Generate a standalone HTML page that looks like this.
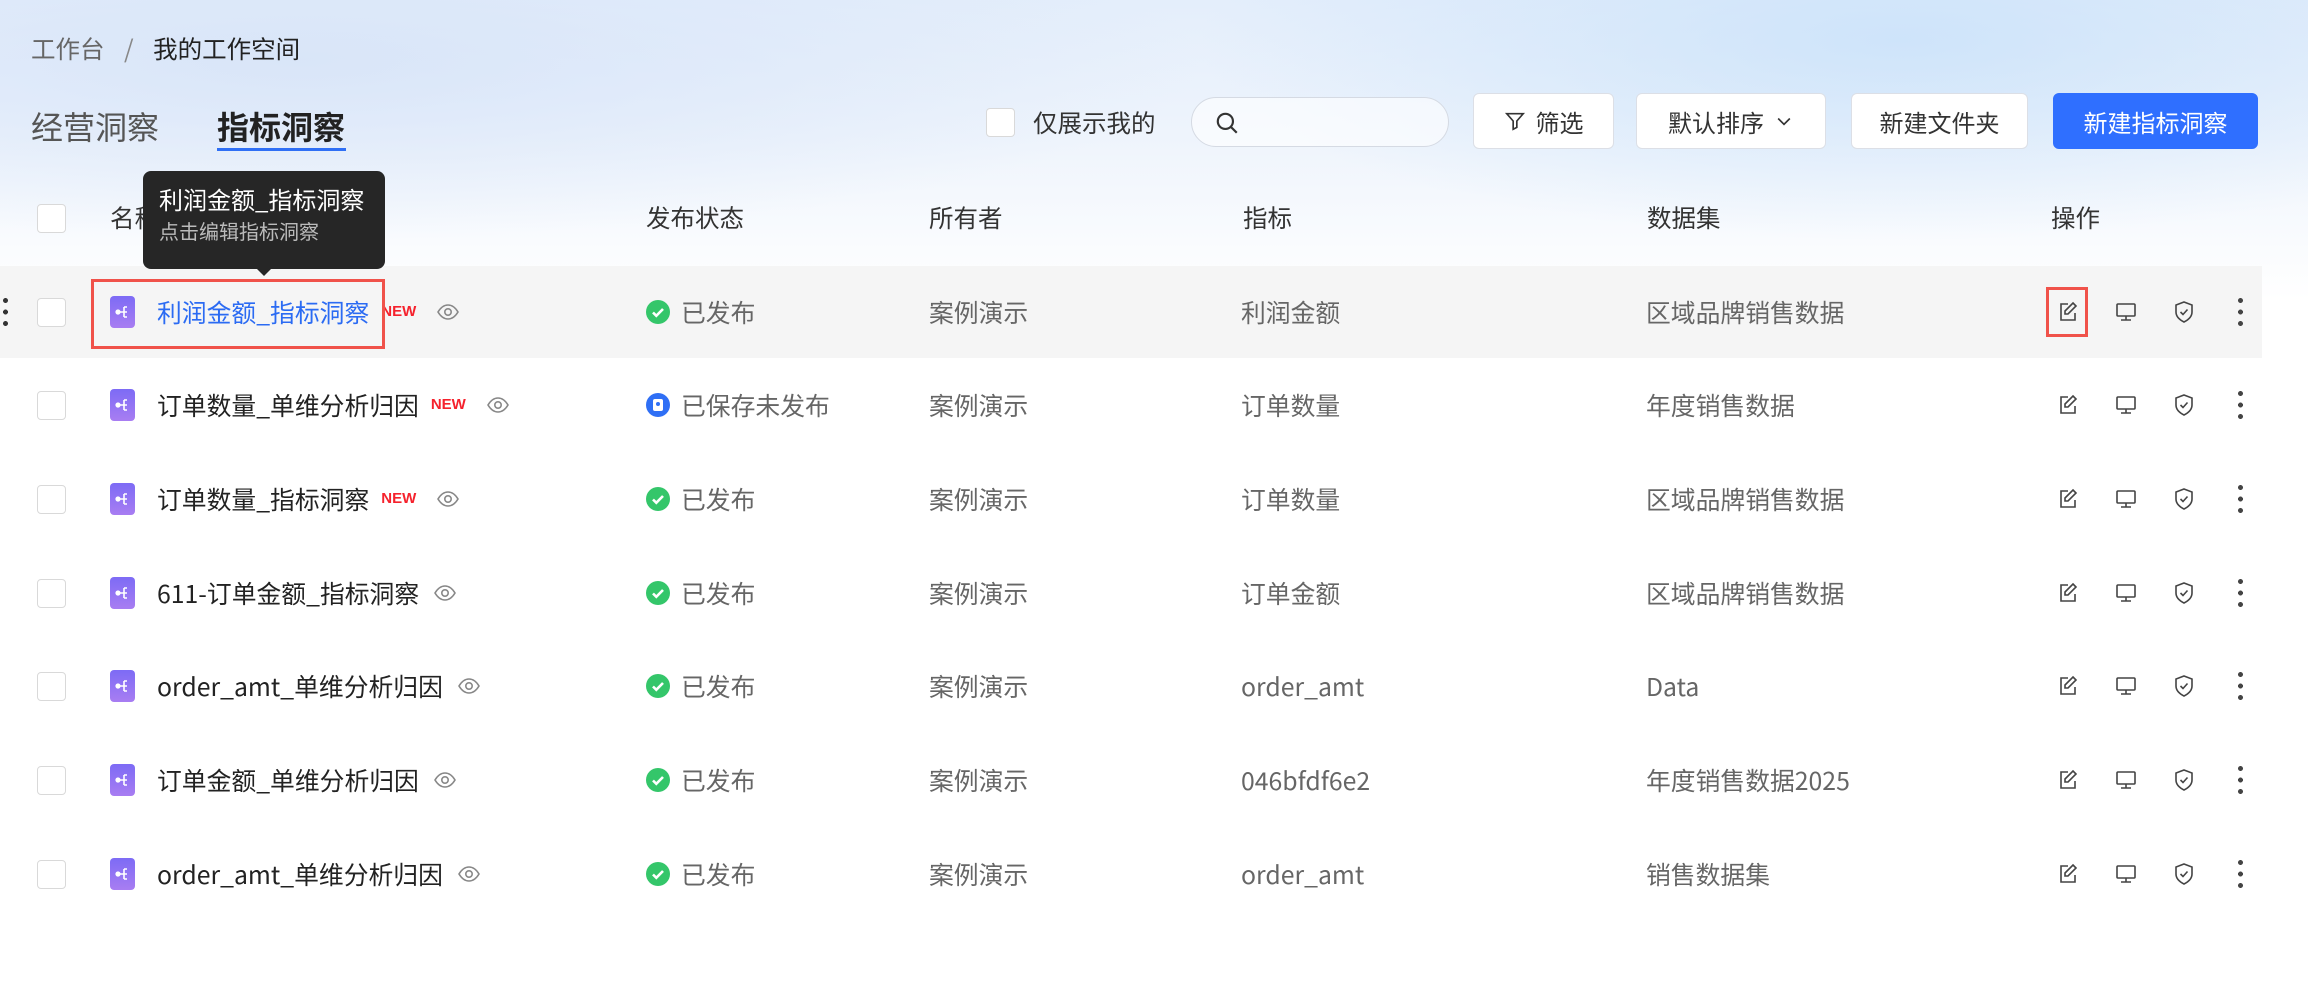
<!DOCTYPE html>
<html><head><meta charset="utf-8"><style>
*{box-sizing:border-box;margin:0;padding:0}
body{width:2308px;height:982px;overflow:hidden;position:relative;background:#fff;font-family:"Noto Sans CJK SC","Liberation Sans",sans-serif;color:#222}
.bg{position:absolute;left:0;top:0;width:2308px;height:300px;background:
radial-gradient(ellipse 700px 200px at 1900px 40px,rgba(200,225,250,.8),rgba(255,255,255,0)),
radial-gradient(ellipse 900px 180px at 300px 60px,rgba(215,228,248,.9),rgba(255,255,255,0)),
linear-gradient(180deg,#e4eefb 0%,#eef4fc 45%,#fff 100%)}
.a{position:absolute;white-space:nowrap}
.cb{position:absolute;width:29px;height:29px;border:1.5px solid #d9d9d9;border-radius:4px;background:#fff}
.btn{position:absolute;top:93px;height:56px;border:1.5px solid #dcdfe6;border-radius:6px;background:#fff;font-size:24px;color:#333;display:flex;align-items:center;justify-content:center;gap:10px}
.hd{position:absolute;top:200px;font-size:24.5px;color:#333;line-height:36px}
.row{position:absolute;left:0;width:2262px;height:92px}
.row .t{position:absolute;top:28px;height:36px;line-height:36px;white-space:nowrap;font-size:24.8px;display:flex;align-items:center}
.ico{position:absolute;left:110px;top:50%;margin-top:-16px;width:25px;height:32px;border-radius:4px;background:linear-gradient(180deg,#7d6bf5,#a87df2)}
.new{color:#f5222d;font-weight:bold;font-size:15px;font-family:"Liberation Sans",sans-serif}
.g{color:#666}
.st{position:absolute;left:646px;top:50%;margin-top:-12px;width:24px;height:24px;border-radius:50%;background:#34c66a}
</style></head><body>
<div class="bg"></div>
<div class="a" style="left:31px;top:32px;font-size:24.5px;color:#666;line-height:34px">工作台 <span style="margin:0 14px;color:#888">/</span> <span style="color:#222">我的工作空间</span></div>
<div class="a" style="left:31px;top:104px;font-size:32px;color:#555;line-height:44px">经营洞察</div>
<div class="a" style="left:217px;top:104px;font-size:32px;color:#222;font-weight:bold;line-height:44px">指标洞察</div>
<div class="a" style="left:217px;top:148px;width:129px;height:3px;background:#2f6ff5"></div>
<div class="cb" style="left:986px;top:108px"></div>
<div class="a" style="left:1033px;top:105px;font-size:24.5px;color:#333;line-height:36px">仅展示我的</div>
<div class="a" style="left:1191px;top:97px;width:258px;height:50px;border:1.5px solid #d5dae3;border-radius:25px;background:rgba(255,255,255,.6)">
<svg style="position:absolute;left:22px;top:12px" width="26" height="26" viewBox="0 0 24 24" fill="none" stroke="#333" stroke-width="2"><circle cx="10.5" cy="10.5" r="7"/><path d="M16 16l5 5"/></svg></div>
<div class="btn" style="left:1473px;width:141px"><svg width="22" height="22" viewBox="0 0 24 24" fill="none" stroke="#333" stroke-width="1.8"><path d="M3 4h18l-7 8v7l-4 2v-9z"/></svg>筛选</div>
<div class="btn" style="left:1636px;width:190px">默认排序<svg width="20" height="20" viewBox="0 0 24 24" fill="none" stroke="#333" stroke-width="2"><path d="M5 9l7 7 7-7"/></svg></div>
<div class="btn" style="left:1851px;width:177px">新建文件夹</div>
<div class="btn" style="left:2053px;width:205px;background:#2f6fff;border-color:#2f6fff;color:#fff">新建指标洞察</div>

<div class="cb" style="left:37px;top:204px"></div>
<div class="hd" style="left:110px">名称</div>
<div class="hd" style="left:646px">发布状态</div>
<div class="hd" style="left:929px">所有者</div>
<div class="hd" style="left:1243px">指标</div>
<div class="hd" style="left:1647px">数据集</div>
<div class="hd" style="left:2051px">操作</div>

<div id="rows"></div>
<script>
var d=[["利润金额_指标洞察",1,1,"利润金额","区域品牌销售数据"],["订单数量_单维分析归因",1,0,"订单数量","年度销售数据"],["订单数量_指标洞察",1,1,"订单数量","区域品牌销售数据"],["611-订单金额_指标洞察",0,1,"订单金额","区域品牌销售数据"],["order_amt_单维分析归因",0,1,"order_amt","Data"],["订单金额_单维分析归因",0,1,"046bfdf6e2","年度销售数据2025"],["order_amt_单维分析归因",0,1,"order_amt","销售数据集"]];
var tops=[266,359,453,547,640,734,828],h="";
var eye='<svg width="24" height="24" viewBox="0 0 24 24" fill="none" stroke="#888" stroke-width="1.6"><path d="M2 12c3-5 6-7 10-7s7 2 10 7c-3 5-6 7-10 7s-7-2-10-7z"/><circle cx="12" cy="12" r="3.2"/></svg>';
var tree='<svg width="25" height="32" viewBox="0 0 25 32" fill="none" stroke="#fff" stroke-width="1.6"><circle cx="8" cy="16" r="1.8" fill="#fff"/><path d="M10 16h4M14 11v10M14 11h3M14 16h3M14 21h3"/></svg>';
var ops='<svg style="position:absolute;left:2056px;top:34px" width="24" height="24" viewBox="0 0 24 24" fill="none" stroke="#444" stroke-width="1.6"><path d="M12 4H5v16h14v-7"/><path d="M17 3l3 3-8 8H9v-3z"/></svg><svg style="position:absolute;left:2114px;top:34px" width="24" height="24" viewBox="0 0 24 24" fill="none" stroke="#444" stroke-width="1.6"><rect x="3" y="4" width="18" height="12" rx="1"/><path d="M12 16v4M7 20h10"/></svg><svg style="position:absolute;left:2172px;top:34px" width="24" height="24" viewBox="0 0 24 24" fill="none" stroke="#444" stroke-width="1.6"><path d="M12 2l8 3v7c0 5-4 8-8 10-4-2-8-5-8-10V5z"/><path d="M8.5 12l2.5 2.5 4.5-5"/></svg><div style="position:absolute;left:2238px;top:32px;width:5px;height:28px;background:radial-gradient(circle 2.5px at 2.5px 2.5px,#444 98%,transparent),radial-gradient(circle 2.5px at 2.5px 14px,#444 98%,transparent),radial-gradient(circle 2.5px at 2.5px 25.5px,#444 98%,transparent)"></div>';
d.forEach(function(r,i){
 h+='<div class="row" style="top:'+tops[i]+'px;'+(i==0?'background:#f5f5f5':'')+'">';
 if(i==0)h+='<div style="position:absolute;left:3px;top:32px;width:5px;height:28px;background:radial-gradient(circle 2.5px at 2.5px 2.5px,#333 98%,transparent),radial-gradient(circle 2.5px at 2.5px 14px,#333 98%,transparent),radial-gradient(circle 2.5px at 2.5px 25.5px,#333 98%,transparent)"></div>';
 h+='<div class="cb" style="left:37px;top:32px"></div><div class="ico">'+tree+'</div>';
 h+='<div class="t" style="left:157px;'+(i==0?'color:#2b6bf3':'')+'">'+r[0]+(r[1]?'<span class="new" style="margin-left:12px">NEW</span>':'')+'<span style="display:inline-flex;margin-left:'+(r[1]?20:14)+'px">'+eye+'</span></div>';
 if(r[2])h+='<div class="st"><svg width="24" height="24" viewBox="0 0 24 24" fill="none" stroke="#fff" stroke-width="2.6"><path d="M7 12.5l3.3 3.3L17 9"/></svg></div>';
 else h+='<div class="st" style="background:#2f6ff5"><div style="position:absolute;left:7px;top:6px;width:10px;height:12px;border-radius:2px;background:#fff"></div><div style="position:absolute;left:10px;top:9px;width:4px;height:4px;border-radius:50%;background:#2f6ff5"></div></div>';
 h+='<div class="t g" style="left:681px">'+(r[2]?'已发布':'已保存未发布')+'</div>';
 h+='<div class="t g" style="left:929px">案例演示</div><div class="t g" style="left:1241px">'+r[3]+'</div><div class="t g" style="left:1646px">'+r[4]+'</div>'+ops+'</div>';
});
document.getElementById('rows').innerHTML=h;
</script>
<div class="a" style="left:91px;top:279px;width:294px;height:70px;border:3px solid #f0524a"></div>
<div class="a" style="left:2046px;top:287px;width:42px;height:50px;border:3px solid #f0524a"></div>
<div class="a" style="left:143px;top:171px;width:242px;height:98px;background:#262626;border-radius:8px;padding:12px 16px">
<div style="color:#fff;font-size:24px;line-height:32px">利润金额_指标洞察</div>
<div style="color:#bbb;font-size:20px;line-height:32px">点击编辑指标洞察</div></div>
<div class="a" style="left:256px;top:268px;width:0;height:0;border-left:8px solid transparent;border-right:8px solid transparent;border-top:8px solid #262626"></div>
</body></html>
